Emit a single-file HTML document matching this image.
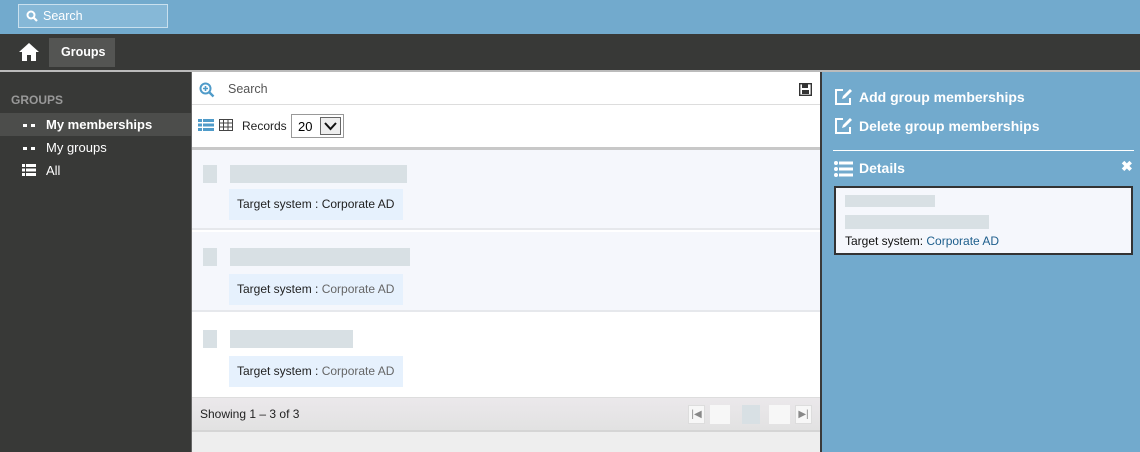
<!DOCTYPE html>
<html><head><meta charset="utf-8"><style>
*{margin:0;padding:0;box-sizing:border-box}
body{width:1140px;height:452px;overflow:hidden;font-family:"Liberation Sans",sans-serif;font-size:13px;background:#72aacd;position:relative}
.abs{position:absolute;white-space:nowrap}
.top{left:0;top:0;width:1140px;height:34px;background:#72aacd}
.sbox{left:18px;top:4px;width:150px;height:24px;border:1px solid #c9e0ee;background:#86b8d7;color:#fff;font-size:12.5px;padding:4px 0 0 24px}
.nav{left:0;top:34px;width:1140px;height:36px;background:#383937}
.navline{left:0;top:70px;width:1140px;height:2px;background:#bbb}
.side{left:0;top:72px;width:191px;height:380px;background:#383937;color:#fff}
.main{left:191px;top:72px;width:629px;height:380px;background:#fff;border-left:1px solid #666}
.right{left:820px;top:72px;width:320px;height:380px;background:#72aacd;border-left:2px solid #3a3a3a}
.bar{background:#d8e0e4}
.ts{background:#e6f1fd;color:#222;font-size:12px;padding:8px 0 0 8px;height:31px;width:174px}
.row{left:0;width:628px;height:80px;border-bottom:2px solid #e6e8ec}
</style></head><body>
<div class="abs top"></div>
<div class="abs sbox"><svg class="abs" style="left:7px;top:5px" width="12" height="12" viewBox="0 0 12 12"><circle cx="5" cy="5" r="3.5" stroke="#fff" stroke-width="2" fill="none"/><path d="M7.5 7.5L11 11" stroke="#fff" stroke-width="2.2"/></svg>Search</div>
<div class="abs nav"></div>
<svg class="abs" style="left:18px;top:42px" width="22" height="20" viewBox="0 0 22 20"><path d="M11 1L1 10h3v9h5v-6h4v6h5v-9h3z" fill="#fff"/></svg>
<div class="abs" style="left:49px;top:38px;width:66px;height:29px;background:#545553;color:#fff;font-weight:bold;font-size:12.5px;padding:7px 0 0 12px">Groups</div>
<div class="abs navline"></div>
<div class="abs side">
<div class="abs" style="left:11px;top:21px;color:#999;font-size:12px;font-weight:bold">GROUPS</div>
<div class="abs" style="left:0;top:41px;width:191px;height:23px;background:#4c4d4b"></div>
<div class="abs" style="left:23px;top:52px;width:12px;height:3px;border-top:3px dotted #fff"></div>
<div class="abs" style="left:46px;top:45px;font-size:13px;font-weight:bold">My memberships</div>
<div class="abs" style="left:23px;top:75px;width:12px;height:3px;border-top:3px dotted #fff"></div>
<div class="abs" style="left:46px;top:68px;font-size:13px">My groups</div>
<svg class="abs" style="left:22px;top:92px" width="14" height="12" viewBox="0 0 14 12"><g fill="#fff"><rect x="0" y="0" width="3" height="3"/><rect x="0" y="4.5" width="3" height="3"/><rect x="0" y="9" width="3" height="3"/><rect x="4" y="0" width="10" height="3"/><rect x="4" y="4.5" width="10" height="3"/><rect x="4" y="9" width="10" height="3"/></g></svg>
<div class="abs" style="left:46px;top:91px;font-size:13px">All</div>
</div>
<div class="abs main">
<svg class="abs" style="left:7px;top:10px" width="16" height="16" viewBox="0 0 16 16"><circle cx="6.5" cy="6.5" r="5" stroke="#4f9bc9" stroke-width="2" fill="none"/><path d="M4 6.5h5M6.5 4v5" stroke="#4f9bc9" stroke-width="1.6"/><path d="M10 10l4.5 4.5" stroke="#4f9bc9" stroke-width="2.4"/></svg>
<div class="abs" style="left:36px;top:10px;color:#555;font-size:12.5px">Search</div>
<svg class="abs" style="left:607px;top:11px" width="13" height="13" viewBox="0 0 13 13"><rect x="0.7" y="0.7" width="11.6" height="11.6" fill="none" stroke="#333" stroke-width="1.4"/><rect x="3" y="1" width="6" height="4" fill="#333"/><rect x="3" y="7" width="7" height="4" fill="#333"/></svg>
<div class="abs" style="left:0;top:32px;width:628px;height:1px;background:#ddd"></div>
<svg class="abs" style="left:6px;top:47px" width="16" height="12" viewBox="0 0 16 12"><g fill="#4f9bc9"><rect x="0" y="0" width="4" height="3"/><rect x="0" y="4.5" width="4" height="3"/><rect x="0" y="9" width="4" height="3"/><rect x="5" y="0" width="11" height="3"/><rect x="5" y="4.5" width="11" height="3"/><rect x="5" y="9" width="11" height="3"/></g></svg>
<svg class="abs" style="left:27px;top:47px" width="14" height="12" viewBox="0 0 14 12"><rect x="0.5" y="0.5" width="13" height="11" fill="none" stroke="#444"/><path d="M0 4h14M0 8h14M4.5 0v12M9 0v12" stroke="#444"/></svg>
<div class="abs" style="left:50px;top:47px;color:#222;font-size:12px">Records</div>
<div class="abs" style="left:99px;top:42px;width:53px;height:24px;border:1px solid #999;background:#fff;font-size:13px;padding:4px 0 0 6px">20</div>
<div class="abs" style="left:128px;top:45px;width:21px;height:18px;border:1px solid #666;background:#eee"><svg width="19" height="16" viewBox="0 0 19 16"><path d="M4 5l5.5 6 5.5-6" stroke="#111" stroke-width="2" fill="none"/></svg></div>
<div class="abs" style="left:0;top:75px;width:628px;height:3px;background:#c8c8c8"></div>
<div class="abs row" style="top:78px;background:#f5f7fc"><div class="abs bar" style="left:11px;top:15px;width:14px;height:18px"></div><div class="abs bar" style="left:38px;top:15px;width:177px;height:18px"></div><div class="abs ts" style="left:37px;top:39px">Target system : Corporate AD</div></div>
<div class="abs row" style="top:160px;background:#f5f7fc"><div class="abs bar" style="left:11px;top:16px;width:14px;height:18px"></div><div class="abs bar" style="left:38px;top:16px;width:180px;height:18px"></div><div class="abs ts" style="left:37px;top:42px">Target system : <span style="color:#666">Corporate AD</span></div></div>
<div class="abs row" style="top:242px;background:#fff;border:none"><div class="abs bar" style="left:11px;top:16px;width:14px;height:18px"></div><div class="abs bar" style="left:38px;top:16px;width:123px;height:18px"></div><div class="abs ts" style="left:37px;top:42px">Target system : <span style="color:#666">Corporate AD</span></div></div>
<div class="abs" style="left:0;top:325px;width:628px;height:35px;background:linear-gradient(#ebe8eb,#e2e2e2);border-top:1px solid #ddd;border-bottom:2px solid #d5d5d5"></div>
<div class="abs" style="left:8px;top:335px;color:#222;font-size:12px">Showing 1 – 3 of 3</div>
<div class="abs" style="left:496px;top:333px;width:17px;height:19px;background:#f7f7f7;border:1px solid #ddd;font-size:10px;color:#888;text-align:center;line-height:17px">|◀</div>
<div class="abs" style="left:518px;top:333px;width:20px;height:19px;background:#f7f7f7"></div>
<div class="abs" style="left:550px;top:333px;width:18px;height:19px;background:#d8e0e4"></div>
<div class="abs" style="left:577px;top:333px;width:21px;height:19px;background:#f7f7f7"></div>
<div class="abs" style="left:603px;top:333px;width:17px;height:19px;background:#f7f7f7;border:1px solid #ddd;font-size:10px;color:#888;text-align:center;line-height:17px">▶|</div>
<div class="abs" style="left:0;top:360px;width:628px;height:20px;background:#eee"></div>
</div>
<div class="abs right">
<svg class="abs" style="left:12px;top:16px" width="20" height="18" viewBox="0 0 20 18"><path d="M9 2H2v14h14v-6" stroke="#fff" stroke-width="2" fill="none"/><path d="M8 11l1-3 7-7 2 2-7 7z" fill="#fff"/></svg>
<div class="abs" style="left:37px;top:17px;color:#fff;font-weight:bold;font-size:14px">Add group memberships</div>
<svg class="abs" style="left:12px;top:45px" width="20" height="18" viewBox="0 0 20 18"><path d="M9 2H2v14h14v-6" stroke="#fff" stroke-width="2" fill="none"/><path d="M8 11l1-3 7-7 2 2-7 7z" fill="#fff"/></svg>
<div class="abs" style="left:37px;top:46px;color:#fff;font-weight:bold;font-size:14px">Delete group memberships</div>
<div class="abs" style="left:11px;top:78px;width:301px;height:1px;background:#fff"></div>
<svg class="abs" style="left:12px;top:89px" width="19" height="16" viewBox="0 0 19 16"><g fill="#fff"><circle cx="2" cy="2" r="2"/><circle cx="2" cy="8" r="2"/><circle cx="2" cy="14" r="2"/><rect x="5" y="0.5" width="14" height="3"/><rect x="5" y="6.5" width="14" height="3"/><rect x="5" y="12.5" width="14" height="3"/></g></svg>
<div class="abs" style="left:37px;top:88px;color:#fff;font-weight:bold;font-size:14px">Details</div>
<div class="abs" style="left:299px;top:86px;color:#fff;font-weight:bold;font-size:14px">✖</div>
<div class="abs" style="left:12px;top:114px;width:299px;height:69px;background:#f5f7fc;border:2px solid #333">
<div class="abs bar" style="left:9px;top:7px;width:90px;height:12px"></div>
<div class="abs bar" style="left:9px;top:27px;width:144px;height:14px"></div>
<div class="abs" style="left:9px;top:46px;font-size:12px;color:#111">Target system: <span style="color:#1d5e8c">Corporate AD</span></div>
</div>
</div>
</body></html>
